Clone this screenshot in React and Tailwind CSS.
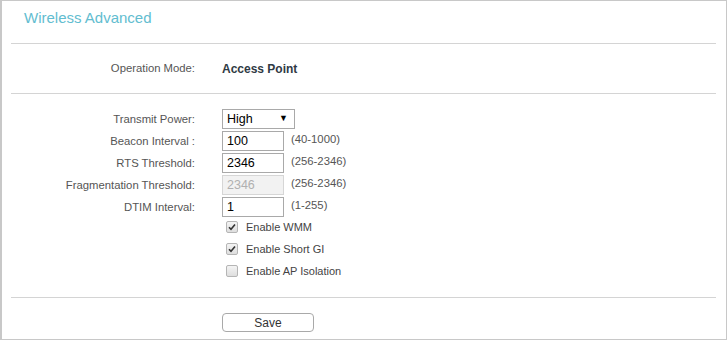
import React, { useState } from 'react';

const rows = [
  { label: 'Beacon Interval :', value: '100', range: '(40-1000)' },
  { label: 'RTS Threshold:', value: '2346', range: '(256-2346)' },
  { label: 'Fragmentation Threshold:', value: '2346', range: '(256-2346)', disabled: true },
  { label: 'DTIM Interval:', value: '1', range: '(1-255)' },
];

const Check = ({ checked, onClick }) => (
  <span
    onClick={onClick}
    className="w-[12px] h-[12px] rounded-[2px] border border-[#b5b5b5] bg-gradient-to-b from-[#f4f4f4] to-[#dedede] flex items-center justify-center"
  >
    {checked && (
      <svg width="8" height="8" viewBox="0 0 8 8">
        <path d="M1 4.2 L3 6.3 L7 1.6" fill="none" stroke="#333" strokeWidth="1.6" />
      </svg>
    )}
  </span>
);

const App = () => {
  const [opts, setOpts] = useState({ wmm: true, sgi: true, ap: false });

  const toggle = (k) => setOpts({ ...opts, [k]: !opts[k] });

  return (
    <div className="w-[727px] h-[340px] border border-[#c8c8c8] border-l-2 bg-white font-['Liberation_Sans',Arial,sans-serif] text-[11.3px] text-[#555]">
      <div className="ml-[9px] mr-[10px]">
        <div className="h-[42px] pl-[13px] pt-[8px] text-[15px] leading-[18px] text-[#62bdd0]">Wireless Advanced</div>

        <div className="border-t border-[#d4d4d4]" />
        <div className="h-[49px] flex items-center">
          <div className="w-[184px] text-right">Operation Mode:</div>
          <div className="ml-[27px] text-[12px] font-bold text-[#2f3a44]">Access Point</div>
        </div>

        <div className="border-t border-[#d4d4d4]" />
        <div className="pt-[14px]">
          <div className="h-[22px] flex items-center">
            <div className="w-[184px] text-right">Transmit Power:</div>
            <div className="ml-[27px] w-[73px] h-[20px] border border-[#a9a9a9] flex items-center justify-between pl-[4px] pr-[6px] text-[12.5px] text-black">
              <span>High</span>
              <span className="text-[9px]">▼</span>
            </div>
          </div>
          {rows.map((r) => (
            <div key={r.label} className="h-[22px] flex items-center">
              <div className="w-[184px] text-right">{r.label}</div>
              <div
                className={`ml-[27px] w-[62px] h-[20px] border flex items-center pl-[4px] text-[12.5px] ${
                  r.disabled ? 'bg-[#f2f2f2] border-[#d6d6d6] text-[#b0b0b0]' : 'border-[#a9a9a9] text-black'
                }`}
              >
                {r.value}
              </div>
              <div className="ml-[7px] -mt-[3px]">{r.range}</div>
            </div>
          ))}

          <div className="-mt-[2px] pb-[15px] pl-[215px]">
            {[
              ['wmm', 'Enable WMM'],
              ['sgi', 'Enable Short GI'],
              ['ap', 'Enable AP Isolation'],
            ].map(([k, text]) => (
              <div key={k} className="h-[22px] flex items-center">
                <Check checked={opts[k]} onClick={() => toggle(k)} />
                <span className="ml-[8px] text-[11px] text-[#444]">{text}</span>
              </div>
            ))}
          </div>
        </div>

        <div className="border-t border-[#d4d4d4]" />
        <div className="pt-[15px] pl-[211px]">
          <button className="w-[92px] h-[19px] border border-[#a9a9a9] rounded-[4px] bg-white text-[12px] text-[#333] leading-none">
            Save
          </button>
        </div>
      </div>
    </div>
  );
};

export default App;
